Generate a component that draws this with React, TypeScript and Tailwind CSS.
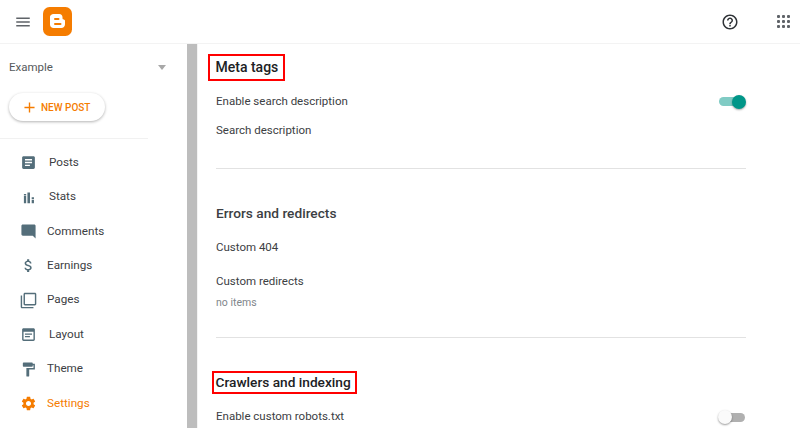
import React from "react";

const navItems = [
  { label: "Posts", gap: "w-[29.500px]", d: "M19 3H5c-1.100 0-2 .9-2 2v14c0 1.100.9 2 2 2h14c1.100 0 2-.9 2-2V5c0-1.100-.9-2-2-2zm-5 14H7v-2h7v2zm3-4H7v-2h10v2zm0-4H7V7h10v2z" },
  { label: "Stats", gap: "w-[29.500px]", d: "M5.500 10h3.200v10H5.500V10zm0-3h3.200v2H5.500V7zM10.500 5h3.600v15h-3.600V5zm6 6.500h3.200v3h-3.200v-3zm0 4h3.200V20h-3.200v-4.500z" },
  { label: "Comments", gap: "w-[27.500px]", d: "M21.990 4c0-1.100-.89-2-1.990-2H4c-1.100 0-2 .9-2 2v12c0 1.100.9 2 2 2h14l4 4-.01-18z" },
  { label: "Earnings", gap: "w-[27.500px]", d: "M11.800 10.900c-2.270-.59-3-1.200-3-2.150 0-1.090 1.010-1.850 2.700-1.850 1.780 0 2.440.85 2.500 2.100h2.210c-.07-1.720-1.120-3.300-3.210-3.810V3h-3v2.160c-1.940.42-3.500 1.680-3.500 3.610 0 2.310 1.910 3.460 4.700 4.130 2.500.6 3 1.480 3 2.410 0 .69-.49 1.790-2.700 1.790-2.060 0-2.870-.92-2.980-2.100h-2.200c.12 2.190 1.760 3.420 3.680 3.830V21h3v-2.150c1.950-.37 3.500-1.500 3.500-3.550 0-2.840-2.430-3.810-4.700-4.400z" },
  { label: "Pages", gap: "w-[27.500px]", d: "M3 5H1v16c0 1.100.9 2 2 2h16v-2H3V5zm18-4H7c-1.100 0-2 .9-2 2v14c0 1.100.9 2 2 2h14c1.100 0 2-.9 2-2V3c0-1.100-.9-2-2-2zm0 16H7V3h14v14z" },
  { label: "Layout", gap: "w-[29.500px]", d: "M19 3H5c-1.100 0-2 .9-2 2v14c0 1.100.9 2 2 2h14c1.100 0 2-.9 2-2V5c0-1.100-.9-2-2-2zm0 16H5V8h14v11zM7 10.500h10v2H7v-2zm0 3.500h7v2H7v-2z" },
  { label: "Theme", gap: "w-[27.500px]", d: "M18 4V3c0-.55-.45-1-1-1H5c-.55 0-1 .45-1 1v4c0 .55.45 1 1 1h12c.55 0 1-.45 1-1V6h1v4H9v11c0 .55.45 1 1 1h2c.55 0 1-.45 1-1v-9h8V4h-3z" },
  { label: "Settings", gap: "w-[27.500px]", active: true, d: "M19.140 12.940c.04-.3.06-.61.06-.94 0-.32-.02-.64-.07-.94l2.030-1.580c.18-.14.23-.41.12-.61l-1.920-3.320c-.12-.22-.37-.29-.59-.22l-2.390.96c-.5-.38-1.030-.7-1.620-.94l-.36-2.540c-.04-.24-.24-.41-.48-.41h-3.840c-.24 0-.43.17-.47.41l-.36 2.540c-.59.24-1.130.57-1.620.94l-2.390-.96c-.22-.08-.47 0-.59.22L2.740 8.870c-.12.21-.08.47.12.61l2.030 1.580c-.05.3-.09.63-.09.94s.02.64.07.94l-2.030 1.580c-.18.14-.23.41-.12.61l1.920 3.320c.12.22.37.29.59.22l2.390-.96c.5.38 1.030.7 1.620.94l.36 2.540c.05.24.24.41.48.41h3.840c.24 0 .44-.17.47-.41l.36-2.540c.59-.24 1.130-.56 1.620-.94l2.390.96c.22.08.47 0 .59-.22l1.920-3.320c.12-.22.07-.47-.12-.61l-2.010-1.580zM12 15.600c-1.980 0-3.600-1.620-3.600-3.600s1.620-3.600 3.600-3.600 3.600 1.620 3.600 3.600-1.620 3.600-3.600 3.600z" },
];

function Toggle({ on }: { on: boolean }) {
  return (
    <div className={on ? "relative w-[26px] h-[9px] mr-[1px] rounded-full bg-[#80cbc4]" : "relative w-[26px] h-[9px] mr-[1px] rounded-full bg-[#b0b0b0]"}>
      <div
        className={
          on
            ? "absolute -right-[1px] -top-[2.500px] w-[14px] h-[14px] rounded-full bg-[#009688] shadow-[0_1px_2px_rgba(0,0,0,0.35)]"
            : "absolute -left-[1px] -top-[2.500px] w-[14px] h-[14px] rounded-full bg-[#fafafa] shadow-[0_1px_2px_rgba(0,0,0,0.4)]"
        }
      />
    </div>
  );
}

export default function App() {
  return (
    <div className="w-[800px] h-[428px] overflow-hidden bg-white flex flex-col font-['Roboto',sans-serif] text-[#3c4043]">
      <header className="h-[44px] shrink-0 flex items-center border-b border-[#f3f3f3]">
        <svg viewBox="0 0 24 24" className="w-[18px] h-[18px] ml-[14px] fill-[#5f6368]">
          <path d="M3 18h18v-2H3v2zm0-5h18v-2H3v2zm0-7v2h18V6H3z" />
        </svg>
        <svg viewBox="0 0 29 29" className="w-[29px] h-[29px] ml-[11px]">
          <rect width="29" height="29" rx="6.500" fill="#f57c00" />
          <path
            d="M10.500 7h5.800c2 0 3.200 1.400 3.200 3.200v1c0 .9.6 1.100 1.200 1.200.7.1 1.300.6 1.300 1.400v3.400c0 2-1.600 3.800-3.700 3.800h-7.800c-2 0-3.500-1.600-3.500-3.600v-7.600C7 8.600 8.500 7 10.500 7z"
            fill="#fff"
          />
          <rect x="11" y="11" width="5.500" height="2" rx="1" fill="#f57c00" />
          <rect x="11" y="16" width="7.500" height="2" rx="1" fill="#f57c00" />
        </svg>
        <svg viewBox="0 0 24 24" className="w-[18px] h-[18px] ml-auto fill-[#2f3337]">
          <path d="M11 18h2v-2h-2v2zm1-16C6.480 2 2 6.480 2 12s4.480 10 10 10 10-4.480 10-10S17.520 2 12 2zm0 18c-4.410 0-8-3.590-8-8s3.590-8 8-8 8 3.590 8 8-3.590 8-8 8zm0-14c-2.210 0-4 1.790-4 4h2c0-1.100.9-2 2-2s2 .9 2 2c0 2-3 1.750-3 5h2c0-2.250 3-2.500 3-5 0-2.210-1.790-4-4-4z" />
        </svg>
        <div className="grid grid-cols-3 gap-[2px] ml-[38px] mr-[10px]">
          {Array.from({ length: 9 }).map((_, i) => (
            <span key={i} className="w-[3px] h-[3px] rounded-[1px] bg-[#5f6368]" />
          ))}
        </div>
      </header>

      <div className="flex flex-1 min-h-0">
        <aside className="w-[187px] shrink-0">
          <div className="flex items-center justify-between pl-[9px] pr-[21px] pt-[2px] h-[45px]">
            <span className="text-[11.500px] text-[#55595c]">Example</span>
            <span className="w-0 h-0 border-x-[4px] border-x-transparent border-t-[5px] border-t-[#a8a8a8]" />
          </div>
          <div className="px-[9px] mt-[4px]">
            <button className="w-[96px] h-[28px] rounded-full bg-white flex items-center pl-[15px] gap-[6px] shadow-[0_1px_3px_rgba(0,0,0,0.3)]">
              <svg viewBox="0 0 12 12" fill="none" stroke="#f57c00" strokeWidth="1.500" className="w-[11px] h-[11px]">
                <path d="M6 0.500v11M0.500 6h11" />
              </svg>
              <span className="text-[10px] font-medium text-[#f57c00]">NEW POST</span>
            </button>
          </div>
          <div className="w-[148px] border-t border-[#f1f1f1] mt-[17px]" />
          <nav className="pt-[6.500px]">
            {navItems.map((item) => (
              <div key={item.label} className="h-[34.400px] flex items-center pl-[19.500px]">
                <svg
                  viewBox="0 0 24 24"
                  className={item.active ? "w-[17px] h-[17px] fill-[#f57c00]" : "w-[17px] h-[17px] fill-[#546e7a]"}
                >
                  <path d={item.d} />
                </svg>
                <span className={item.gap + " shrink-0 -ml-[17px]"} />
                <span className={item.active ? "text-[11.700px] text-[#f57c00]" : "text-[11.700px] text-[#3c4043]"}>
                  {item.label}
                </span>
              </div>
            ))}
          </nav>
        </aside>

        <div className="w-[10px] shrink-0 bg-[#bdbdbd]" />
        <div className="w-[1px] shrink-0 bg-[#f3f3f3]" />

        <main className="flex-1 min-w-0 pl-[18px] pr-[54px]">
          <div className="pt-[10px] -ml-[8px]">
            <h2 className="inline-block border-[2.500px] border-[#ff0000] pl-[5.500px] pr-[4.500px] h-[27px] leading-[22px] text-[14px] font-medium text-[#202124]">
              Meta tags
            </h2>
          </div>
          <div className="h-[29px] mt-[6px] flex items-center justify-between text-[11.500px]">
            <span>Enable search description</span>
            <Toggle on />
          </div>
          <div className="h-[29px] flex items-center text-[11.500px]">Search description</div>
          <div className="border-t border-[#e2e2e2] mt-[23px]" />

          <h2 className="mt-[36px] h-[17px] leading-[17px] text-[13.700px] font-medium text-[#3c4043]">Errors and redirects</h2>
          <div className="h-[20px] mt-[16px] flex items-center text-[11.500px]">Custom 404</div>
          <div className="h-[20px] mt-[14px] flex items-center text-[11.500px]">Custom redirects</div>
          <div className="h-[14px] mt-[4px] flex items-center text-[10.500px] text-[#80868b]">no items</div>
          <div className="border-t border-[#e2e2e2] mt-[27px]" />

          <div className="mt-[32px] -ml-[4px]">
            <h2 className="inline-block border-[2.500px] border-[#ff0000] pl-[1.500px] pr-[4px] h-[23px] leading-[18px] text-[13.700px] font-medium text-[#202124]">
              Crawlers and indexing
            </h2>
          </div>
          <div className="h-[20px] mt-[13px] flex items-center justify-between text-[11.500px]">
            <span>Enable custom robots.txt</span>
            <Toggle on={false} />
          </div>
        </main>
      </div>
    </div>
  );
}
